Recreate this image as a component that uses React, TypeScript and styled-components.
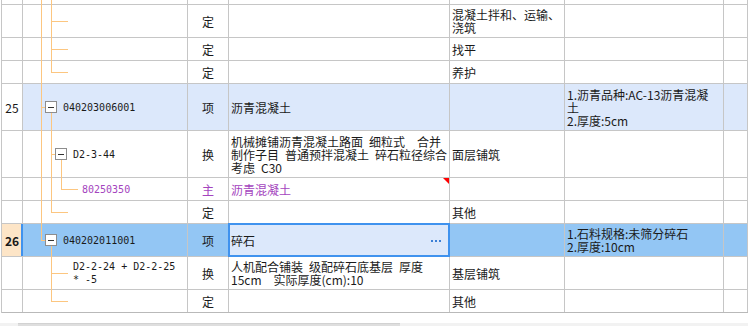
import React from "react";
import styled, { createGlobalStyle, css } from "styled-components";

const GRID = "#c6c6c6";
const TREE = "#fcc680";
const PURPLE = "#a444be";
const BLUE = "#3f92ee";

const COLS = "21px 165px 41px 221px 115px 159px 1fr";

const GlobalStyle = createGlobalStyle`
  html, body {
    margin: 0;
    padding: 0;
    background: #fff;
  }
  body {
    font-family: "Noto Sans CJK SC", "Noto Sans", sans-serif;
    font-size: 12px;
    color: #1a1a1a;
    word-spacing: 3.3px;
  }
`;

type GuideSpec = {
  full?: number[];
  upper?: number[];
  lower?: number[];
  stubs?: [number, number][];
};

type Tone = "plain" | "item" | "active";

type RowData = {
  h: number;
  no?: string;
  tone?: Tone;
  indent?: number;
  toggle?: boolean;
  code?: string;
  kind?: string;
  name?: string;
  feature?: string;
  spec?: string;
  purple?: boolean;
  flag?: boolean;
  selected?: boolean;
  guides: GuideSpec;
};

const rows: RowData[] = [
  { h: 4, guides: { full: [18, 28] } },
  {
    h: 32,
    kind: "定",
    feature: "混凝土拌和、运输、\n浇筑",
    guides: { full: [18, 28], stubs: [[28, 45]] },
  },
  { h: 22, kind: "定", feature: "找平", guides: { full: [18, 28], stubs: [[28, 45]] } },
  { h: 22, kind: "定", feature: "养护", guides: { full: [18], upper: [28], stubs: [[28, 45]] } },
  {
    h: 46,
    no: "25",
    tone: "item",
    indent: 22,
    toggle: true,
    code: "040203006001",
    kind: "项",
    name: "沥青混凝土",
    spec: "1.沥青品种:AC-13沥青混凝\n土\n2.厚度:5cm",
    guides: { full: [18], lower: [28], stubs: [[18, 22]] },
  },
  {
    h: 46,
    indent: 32,
    toggle: true,
    code: "D2-3-44",
    kind: "换",
    name: "机械摊铺沥青混凝土路面 细粒式  合并\n制作子目 普通预拌混凝土 碎石粒径综合\n考虑 C30",
    feature: "面层铺筑",
    guides: { full: [18, 28], lower: [38], stubs: [[28, 32]] },
  },
  {
    h: 22,
    indent: 59,
    code: "80250350",
    kind: "主",
    name: "沥青混凝土",
    purple: true,
    flag: true,
    guides: { full: [18, 28], upper: [38], stubs: [[38, 55]] },
  },
  { h: 22, kind: "定", feature: "其他", guides: { full: [18], upper: [28], stubs: [[28, 45]] } },
  {
    h: 32,
    no: "26",
    tone: "active",
    indent: 22,
    toggle: true,
    code: "040202011001",
    kind: "项",
    name: "碎石",
    selected: true,
    spec: "1.石料规格:未筛分碎石\n2.厚度:10cm",
    guides: { upper: [18], lower: [28], stubs: [[18, 22]] },
  },
  {
    h: 32,
    indent: 50,
    code: "D2-2-24 + D2-2-25\n* -5",
    kind: "换",
    name: "人机配合铺装 级配碎石底基层 厚度\n15cm  实际厚度(cm):10",
    feature: "基层铺筑",
    guides: { full: [28], stubs: [[28, 45]] },
  },
  { h: 22, kind: "定", feature: "其他", guides: { upper: [28], stubs: [[28, 45]] } },
];

const Page = styled.div`
  width: 748px;
  height: 326px;
  overflow: hidden;
`;

const Sheet = styled.div`
  margin-left: 1px;
  border-left: 1px solid ${GRID};
`;

const Row = styled.div<{ $h: number; $tone: Tone; $last?: boolean }>`
  display: grid;
  grid-template-columns: ${COLS};
  height: ${(p) => p.$h}px;
  border-bottom: 1px solid ${(p) => (p.$last ? "#b9b9b9" : GRID)};
  background: ${(p) =>
    p.$tone === "item" ? "#dce8fb" : p.$tone === "active" ? "#93c6f4" : "#fff"};
`;

const Cell = styled.div`
  border-right: 1px solid ${GRID};
  display: flex;
  align-items: center;
  min-width: 0;
`;

const NoCell = styled(Cell)<{ $active?: boolean }>`
  justify-content: center;
  background: #fff;
  ${(p) =>
    p.$active &&
    css`
      background: #fde5c7;
      font-weight: 700;
      border-right-color: ${BLUE};
      box-shadow: inset -1px 0 0 ${BLUE};
    `}
`;

const TreeCell = styled(Cell)<{ $indent: number }>`
  position: relative;
  padding-left: ${(p) => p.$indent}px;
`;

const GuideSvg = styled.svg`
  position: absolute;
  left: 0;
  top: 0;
  overflow: visible;
  pointer-events: none;
`;

const Toggle = styled.span`
  position: relative;
  z-index: 1;
  flex: none;
  box-sizing: border-box;
  width: 12px;
  height: 12px;
  margin-right: 6px;
  border: 1px solid #8d8d8d;
  background: #fff;
  display: flex;
  align-items: center;
  justify-content: center;

  &::before {
    content: "";
    width: 6px;
    height: 1px;
    background: #333;
  }
`;

const Code = styled.span<{ $purple?: boolean }>`
  position: relative;
  z-index: 1;
  font-family: "DejaVu Sans Mono", "Liberation Mono", monospace;
  font-size: 10px;
  line-height: 13px;
  word-spacing: 0;
  white-space: pre;
  color: ${(p) => (p.$purple ? PURPLE : "#1a1a1a")};
`;

const KindCell = styled(Cell)<{ $purple?: boolean }>`
  justify-content: center;
  color: ${(p) => (p.$purple ? PURPLE : "#1a1a1a")};
`;

const TextCell = styled(Cell)<{ $purple?: boolean }>`
  padding-left: 2px;
  white-space: pre;
  line-height: 13px;
  color: ${(p) => (p.$purple ? PURPLE : "#1a1a1a")};
`;

const NameCell = styled(TextCell)<{ $selected?: boolean; $flag?: boolean }>`
  position: relative;
  ${(p) =>
    p.$selected &&
    css`
      background: #dce8fb;
      &::after {
        content: "";
        position: absolute;
        inset: -1px;
        border: 2px solid ${BLUE};
        pointer-events: none;
      }
    `}
  ${(p) =>
    p.$flag &&
    css`
      &::before {
        content: "";
        position: absolute;
        top: 0;
        right: 0;
        border-top: 6px solid #ff0000;
        border-left: 6px solid transparent;
      }
    `}
`;

const SpecCell = styled(TextCell)`
  padding-left: 2px;
`;

const Dots = styled.span`
  margin-left: auto;
  margin-right: 8px;
  margin-top: 2px;
  width: 10px;
  height: 2px;
  background-image: linear-gradient(to right, #3b7fd6 2px, transparent 2px);
  background-size: 4px 2px;
  background-repeat: repeat-x;
`;

const Track = styled.div`
  margin-top: 10px;
  height: 4px;
  background: #f2f2f2;
  display: flex;
`;

const Thumb = styled.div`
  margin-left: 18px;
  width: 382px;
  background: #dedede;
  border-top: 1px solid #d2d2d2;
`;

const Guides = ({ h, spec }: { h: number; spec: GuideSpec }) => {
  const c = Math.floor(h / 2) + 0.5;
  const v = (x: number, y1: number, y2: number, k: string) => (
    <line key={k} x1={x + 0.5} x2={x + 0.5} y1={y1} y2={y2} />
  );
  return (
    <GuideSvg width={165} height={h + 1} shapeRendering="crispEdges">
      <g stroke={TREE} strokeWidth={1}>
        {spec.full?.map((x) => v(x, 0, h + 1, `f${x}`))}
        {spec.upper?.map((x) => v(x, 0, c + 0.5, `u${x}`))}
        {spec.lower?.map((x) => v(x, c, h + 1, `l${x}`))}
        {spec.stubs?.map(([a, b]) => (
          <line key={`s${a}`} x1={a} x2={b} y1={c} y2={c} />
        ))}
      </g>
    </GuideSvg>
  );
};

const SheetRow = ({ r, last }: { r: RowData; last: boolean }) => {
  const tone = r.tone ?? "plain";
  return (
    <Row $h={r.h} $tone={tone} $last={last}>
      <NoCell $active={tone === "active"}>{r.no}</NoCell>
      <TreeCell $indent={r.indent ?? 0}>
        <Guides h={r.h} spec={r.guides} />
        {r.toggle && <Toggle />}
        {r.code && <Code $purple={r.purple}>{r.code}</Code>}
      </TreeCell>
      <KindCell $purple={r.purple}>{r.kind}</KindCell>
      <NameCell $purple={r.purple} $selected={r.selected} $flag={r.flag}>
        {r.name}
        {r.selected && <Dots />}
      </NameCell>
      <TextCell>{r.feature}</TextCell>
      <SpecCell>{r.spec}</SpecCell>
      <Cell />
    </Row>
  );
};

export default function App() {
  return (
    <Page>
      <GlobalStyle />
      <Sheet>
        {rows.map((r, i) => (
          <SheetRow key={i} r={r} last={i === rows.length - 1} />
        ))}
      </Sheet>
      <Track>
        <Thumb />
      </Track>
    </Page>
  );
}
